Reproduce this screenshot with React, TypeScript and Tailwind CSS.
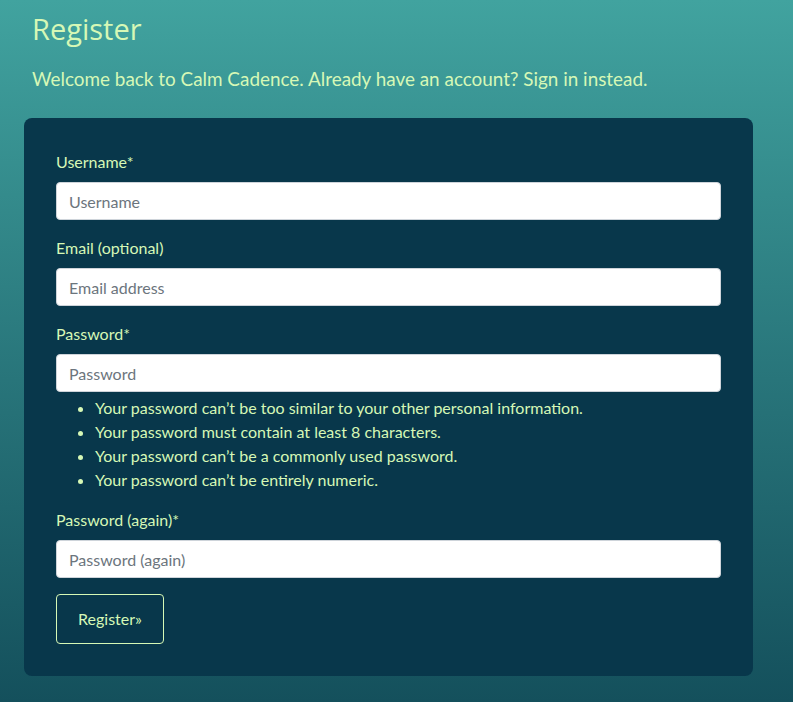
import React from "react";

const fields = [
  { label: "Username*", placeholder: "Username", type: "text" },
  { label: "Email (optional)", placeholder: "Email address", type: "email" },
  { label: "Password*", placeholder: "Password", type: "password" },
];

export default function App() {
  return (
    <div
      className="min-h-screen w-full bg-gradient-to-b from-[#41a39f] to-[#14505c] px-6 pt-[11px] pb-[26px] text-[#d6f8b6]"
      style={{ fontFamily: "Lato, 'Open Sans', sans-serif" }}
    >
      <h1
        className="ml-2 text-[29px] leading-[36px] text-[#d6f8b6]"
        style={{ fontFamily: "'Open Sans', Lato, sans-serif" }}
      >
        Register
      </h1>
      <p className="ml-2 mt-[19px] text-[18.9px] leading-[26px]">
        Welcome back to Calm Cadence. Already have an account? Sign in instead.
      </p>
      <div className="mt-[26px] w-[729px] rounded-lg bg-[#08374b] px-8 pt-[32px] pb-[32px]">
        {fields.map((f, i) => (
          <div key={i} className={i === 0 ? "" : "mt-[16px]"}>
            <label className="block text-[16px] leading-[24px]">{f.label}</label>
            <input
              type={f.type}
              placeholder={f.placeholder}
              className="mt-[8px] block h-[38px] w-[665px] rounded-[4px] border border-[#ced4da] bg-white px-3 text-[16px] text-[#495057] placeholder:text-[#6c757d] outline-none"
            />
          </div>
        ))}
        <ul className="mt-[4px] list-disc pl-[39px] text-[16px] leading-[24px]">
          <li>Your password can’t be too similar to your other personal information.</li>
          <li>Your password must contain at least 8 characters.</li>
          <li>Your password can’t be a commonly used password.</li>
          <li>Your password can’t be entirely numeric.</li>
        </ul>
        <div className="mt-[16px]">
          <label className="block text-[16px] leading-[24px]">Password (again)*</label>
          <input
            type="password"
            placeholder="Password (again)"
            className="mt-[8px] block h-[38px] w-[665px] rounded-[4px] border border-[#ced4da] bg-white px-3 text-[16px] text-[#495057] placeholder:text-[#6c757d] outline-none"
          />
        </div>
        <button className="mt-[16px] h-[50px] w-[108px] rounded-[4px] border border-[#d6f8b6] text-[16px] text-[#d6f8b6]">
          Register»
        </button>
      </div>
    </div>
  );
}
